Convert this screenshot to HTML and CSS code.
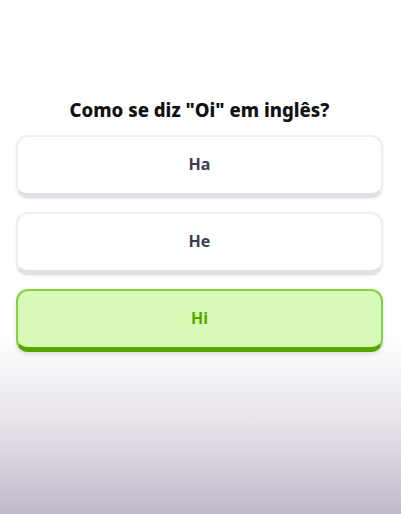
FILE: index.html
```html
<!DOCTYPE html>
<html lang="pt">
<head>
<meta charset="UTF-8" />
<meta name="viewport" content="width=device-width, initial-scale=1" />
<title>Quiz</title>
<link rel="stylesheet" href="styles.css">
</head>
<body>

<div class="screen">
  <h2 class="question">Como se diz "Oi" em inglês?</h2>
  <div class="options">
    <button class="option">Ha</button>
    <button class="option">He</button>
    <button class="option correct">Hi</button>
  </div>
</div>

</body>
</html>
```

FILE: styles.css
```css
html, body { margin: 0; padding: 0; }
body {
  font-family: "Noto Sans", "DejaVu Sans", sans-serif;
  background: #fff;
}
.screen {
  height: 514px;
  box-sizing: border-box;
  padding: 98px 18px 0 16px;
  background: linear-gradient(to bottom, #fff 0, #fff 335px, #e6e2e9 425px, #c2b9cc 514px);
}
.question {
  margin: 0 0 13px;
  font-size: 18.6px;
  line-height: 24px;
  font-weight: 800;
  color: #111;
  text-align: center;
}
.options {
  display: flex;
  flex-direction: column;
  gap: 14px;
}
.option {
  display: block;
  width: 100%;
  height: 63px;
  font-family: inherit;
  font-size: 16px;
  font-weight: 700;
  color: #3c3c50;
  background: #fff;
  border: 2px solid #efefef;
  border-bottom: 5px solid #e1e0e4;
  border-radius: 12px;
  box-shadow: 0 1px 3px rgba(0,0,0,0.07);
  padding: 0 0 2px;
  cursor: pointer;
}
.option.correct {
  background: #d7fbb6;
  border-color: #86d044;
  border-bottom-color: #58a700;
  color: #58a700;
  box-shadow: 0 2px 4px rgba(0,0,0,0.12);
}
```
